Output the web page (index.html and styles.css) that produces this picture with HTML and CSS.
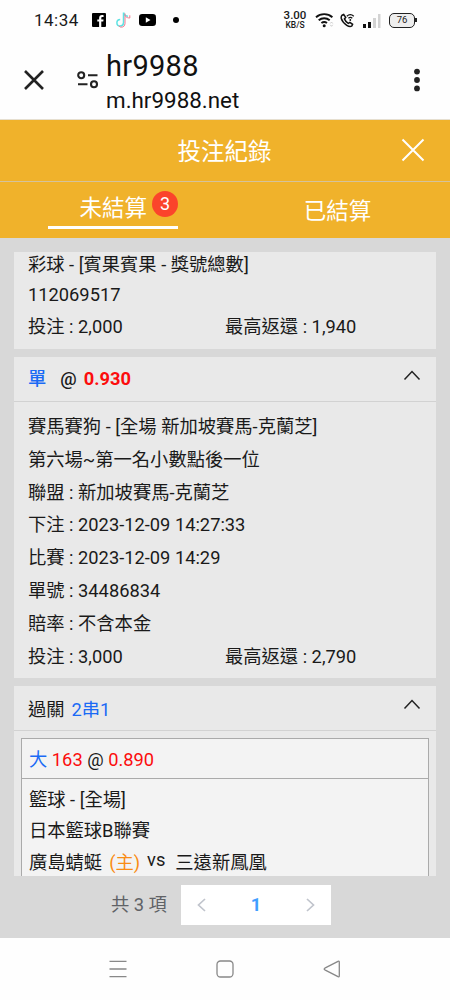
FILE: index.html
```html
<!DOCTYPE html>
<html lang="zh-Hant">
<head>
	<meta charset="UTF-8">
	<title>投注紀錄</title>
	<link rel="stylesheet" href="styles.css">
</head>
<body>
	<div class="status">
		<span class="time">14:34</span>
		<svg class="fb" width="14" height="14" viewBox="0 0 14 14"><rect width="14" height="14" rx="1" fill="#000"/><path d="M9.3 14V8.6h2l.3-2.1H9.3V5.2c0-.7.3-1.1 1.1-1.1h1.2V2.2c-.4-.1-1-.1-1.6-.1-1.800 0-2.900 1-2.900 2.900v1.500H5.300v2.100h1.800V14z" fill="#fff"/></svg>
		<svg class="tiktok" width="16" height="18" viewBox="0 0 16 18" fill="none" stroke-width="1.500"><path d="M8.500 1.500v10.300a3.300 3.300 0 1 1-3.300-3.400M8.800 1.500c.3 2.300 1.900 3.600 4.200 3.800" stroke="#5fe3e3"/><path d="M10 2.500v10.200a3.500 3.500 0 0 1-6.200 2.200M10.500 5.500c1.200 1 2.600 1.500 4.300 1.500V4.300" stroke="#f2778d" stroke-width="1"/></svg>
		<svg class="yt" width="17" height="12" viewBox="0 0 17 12"><rect width="17" height="12" rx="3.200" fill="#000"/><path d="M6.800 3.300v5.400L11.500 6z" fill="#fff"/></svg>
		<i class="dot"></i>
		<div class="speed"><b>3.00</b><span>KB/S</span></div>
		<svg class="wifi" width="19" height="16" viewBox="0 0 19 16" fill="none" stroke="#111" stroke-width="1.900"><path d="M1 5.200a12.500 12.500 0 0 1 16.400 0M3.700 8.200a8.500 8.500 0 0 1 11 0M6.400 11a4.600 4.600 0 0 1 5.600 0"/><circle cx="9.200" cy="13.700" r="1.500" fill="#111" stroke="none"/><path d="M15.300 11.500l1.200-1.500 1.200 1.500M15.300 12.800l1.200 1.500 1.200-1.500" stroke="#ccc" stroke-width="1"/></svg>
		<svg class="call" width="15" height="15" viewBox="0 0 15 15" fill="none" stroke="#111" stroke-width="1.500"><path d="M2 2.300l1.700-.8 2 2.900-1.300 1.500c.8 2 2 3.400 3.900 4.500l1.600-1.100 2.700 2-.8 1.700c-1.200.9-3.200.5-5-.7C3.700 10.200 2 8 1.300 5.500c-.3-1.400 0-2.500.7-3.200z"/><path d="M6.800 3.200c2.200-1.900 4.800-1.900 7 0M8.400 5.200c1.200-1 2.700-1 3.900 0" stroke-width="1.300"/><circle cx="10.300" cy="7" r=".9" fill="#111" stroke="none"/></svg>
		<svg class="signal" width="18" height="15" viewBox="0 0 18 15"><rect y="11" width="3" height="4" fill="#111"/><rect x="5" y="9" width="3" height="6" fill="#111"/><rect x="10" y="5" width="3" height="10" fill="#d3d3d3"/><rect x="15" y="1" width="2.500" height="14" fill="#d3d3d3"/></svg>
		<div class="battery">76</div>
	</div>

	<div class="browser">
		<svg class="exit" width="20" height="20" viewBox="0 0 20 20" stroke="#222" stroke-width="2.600"><path d="M1 1l18 18M19 1L1 19"/></svg>
		<svg class="tune" width="22" height="18" viewBox="0 0 22 18" fill="none" stroke="#222" stroke-width="2.100"><circle cx="4.200" cy="4.200" r="3"/><path d="M11 4.200h9.500M1 13.200h9.500"/><circle cx="17" cy="13.200" r="3"/></svg>
		<div class="site">
			<div class="name">hr9988</div>
			<div class="host">m.hr9988.net</div>
		</div>
		<svg class="more" width="6" height="24" viewBox="0 0 6 24" fill="#222"><circle cx="3" cy="3.600" r="2.900"/><circle cx="3" cy="12" r="2.900"/><circle cx="3" cy="20.400" r="2.900"/></svg>
	</div>

	<div class="title">
		<span>投注紀錄</span>
		<svg class="close" width="24" height="24" viewBox="0 0 24 24" stroke="#fff" stroke-width="2"><path d="M1.500 1.500l21 21M22.500 1.500l-21 21"/></svg>
	</div>
	<div class="tabs">
		<div class="tab current"><span>未結算</span><em>3</em></div>
		<div class="tab">已結算</div>
	</div>

	<div class="main">
		<div class="list">
			<div class="card first">
				<p>彩球 - [賓果賓果 - 獎號總數]</p>
				<p>112069517</p>
				<p class="money"><span>投注 : 2,000</span><span>最高返還 : 1,940</span></p>
			</div>

			<div class="card">
				<div class="head">
					<span class="blue strong">單</span><span class="at">@</span><b class="red">0.930</b>
					<svg class="arrow" width="18" height="11" viewBox="0 0 18 11" fill="none" stroke="#222" stroke-width="1.500"><path d="M1.500 9.500L9 1.500l7.500 8"/></svg>
				</div>
				<div class="body">
					<p>賽馬賽狗 - [全場 新加坡賽馬-克蘭芝]</p>
					<p>第六場~第一名小數點後一位</p>
					<p>聯盟 : 新加坡賽馬-克蘭芝</p>
					<p>下注 : 2023-12-09 14:27:33</p>
					<p>比賽 : 2023-12-09 14:29</p>
					<p>單號 : 34486834</p>
					<p>賠率 : 不含本金</p>
					<p class="money"><span>投注 : 3,000</span><span>最高返還 : 2,790</span></p>
				</div>
			</div>

			<div class="card parlay">
				<div class="head">
					<span>過關</span><span class="blue combo">2串1</span>
					<svg class="arrow" width="18" height="11" viewBox="0 0 18 11" fill="none" stroke="#222" stroke-width="1.500"><path d="M1.500 9.500L9 1.500l7.500 8"/></svg>
				</div>
				<div class="box">
					<div class="odds"><span class="blue">大</span> <span class="red">163</span> @ <span class="red">0.890</span></div>
					<div class="match">
						<p>籃球 - [全場]</p>
						<p>日本籃球B聯賽</p>
						<p class="teams"><span>廣島蜻蜓</span><span class="home">(主)</span><span class="vs">vs</span><span>三遠新鳳凰</span></p>
					</div>
				</div>
			</div>
		</div>

		<div class="pager">
			<span class="total">共 3 項</span>
			<div class="pages">
				<svg width="9" height="14" viewBox="0 0 9 14" fill="none" stroke="#c0c4cc" stroke-width="1.700"><path d="M8 1L1.500 7 8 13"/></svg>
				<b>1</b>
				<svg width="9" height="14" viewBox="0 0 9 14" fill="none" stroke="#c0c4cc" stroke-width="1.700"><path d="M1 1l6.500 6L1 13"/></svg>
			</div>
		</div>
	</div>

	<div class="nav">
		<svg width="18" height="18" viewBox="0 0 18 18" stroke="#888" stroke-width="1.300"><path d="M.5 1.300h17M.5 9h17M.5 16.700h17"/></svg>
		<svg width="18" height="18" viewBox="0 0 18 18" fill="none" stroke="#888" stroke-width="1.300"><rect x="1" y="1" width="16" height="16" rx="3.500"/></svg>
		<svg width="18" height="18" viewBox="0 0 18 18" fill="none" stroke="#888" stroke-width="1.300" stroke-linejoin="round"><path d="M15 1.300L1.800 8.200q-1.300.8 0 1.600L15 16.700q1.300.4 1.300-1V2.300q0-1.400-1.300-1z"/></svg>
	</div>
</body>
</html>
```

FILE: styles.css
```css
*{
	box-sizing: border-box;
	padding: 0;
	margin: 0;
}
body{
	width: 450px;
	height: 1000px;
	overflow: hidden;
	background: #fefefe;
	color: #1a1a1a;
	font: 18.3px/32.8px Roboto, "Noto Sans CJK TC", sans-serif;
}
svg{
	display: block;
	flex: none;
}
/* 手機狀態列 */
.status{
	display: flex;
	align-items: center;
	height: 40px;
	padding-left: 34px;
	line-height: 20px;
}
.time{
	width: 58px;
	font-size: 17px;
	letter-spacing: 0.5px;
}
.tiktok{
	margin-left: 9px;
}
.yt{
	margin-left: 8px;
}
.dot{
	width: 6px;
	height: 6px;
	margin-left: 17px;
	border-radius: 50%;
	background: #000;
}
.speed{
	width: 24px;
	margin-left: 104px;
	text-align: center;
}
.speed b,
.speed span{
	display: block;
	font-size: 11.5px;
	line-height: 11px;
	font-weight: 500;
}
.speed span{
	font-size: 8.5px;
	line-height: 9px;
}
.wifi{
	margin-left: 8px;
}
.call{
	margin-left: 6px;
}
.signal{
	margin-left: 8px;
}
.battery{
	position: relative;
	width: 26px;
	height: 15px;
	margin-left: 8px;
	border: 1.5px solid #222;
	border-radius: 5px;
	background: #eee;
	font-size: 9.5px;
	line-height: 12px;
	text-align: center;
}
.battery::after{
	content: "";
	position: absolute;
	right: -3px;
	top: 4px;
	width: 2px;
	height: 4px;
	background: #222;
}
/* 網址列 */
.browser{
	display: flex;
	align-items: center;
	height: 80px;
	padding: 0 30px 0 24px;
	border-bottom: 1px solid #e6dfd0;
	color: #111;
}
.tune{
	margin-left: 33px;
}
.site{
	flex: 1;
	margin-left: 7px;
	padding-top: 4px;
}
.name{
	font-size: 29px;
	line-height: 36px;
	letter-spacing: 0.3px;
}
.host{
	font-size: 22.4px;
	line-height: 32px;
}
.title{
	display: flex;
	align-items: center;
	height: 62px;
	padding: 0 25px 2px 48px;
	border-bottom: 1px solid #d4c29c;
	background: #f0b22b;
	color: #fff;
	font-size: 23.5px;
}
.title span{
	flex: 1;
	padding-top: 5px;
	text-align: center;
}
.tabs{
	display: flex;
	height: 56px;
	background: #f0b22b;
	color: #fff;
	font-size: 22.5px;
}
.tab{
	flex: 1;
	padding-top: 13px;
	text-align: center;
}
.current{
	flex: none;
	display: flex;
	justify-content: flex-end;
	width: 130px;
	height: 47px;
	margin: 0 47px 0 48px;
	padding-top: 9px;
	border-bottom: 3px solid #fff;
}
.current span{
	padding-top: 1px;
}
.current em{
	width: 26px;
	height: 26px;
	margin-left: 5px;
	border-radius: 50%;
	background: #fb442b;
	font: 18px/26px Roboto, sans-serif;
}
.main{
	height: 700px;
	padding: 14px 14px 0;
	background: #d8d8d8;
}
.list{
	height: 624px;
	overflow: hidden;
}
.card{
	display: flow-root;
	margin-bottom: 8px;
	background: #e9e9e9;
}
.first{
	height: 97px;
	padding: 0 14px;
}
.first p{
	line-height: 30px;
}
.first p:first-child{
	margin-top: -2px;
}
.first .money{
	padding-top: 2px;
}
.head{
	display: flex;
	align-items: center;
	height: 45px;
	padding: 0 15px 0 14px;
	border-bottom: 1px solid #d2d2d2;
}
.arrow{
	margin: -8px 0 0 auto;
}
.blue{
	color: #1a6af5;
}
.red{
	color: #fc0d0d;
}
.strong{
	font-weight: 500;
}
.at{
	margin: 0 7px 0 14px;
	font-weight: 500;
}
.combo{
	margin-left: 7px;
}
.body{
	height: 276px;
	padding: 9px 14px 0;
}
.money{
	display: flex;
}
.money span:first-child{
	width: 197px;
}
/* 過關單 */
.parlay .head span{
	padding-top: 4px;
}
.box{
	height: 200px;
	margin: 7px 7px 0;
	border: 1px solid #aaa;
	background: #f3f3f3;
}
.odds{
	height: 40px;
	padding-left: 7px;
	border-bottom: 1px solid #aaa;
	line-height: 41px;
}
.match{
	padding: 5px 7px;
	line-height: 31.4px;
}
.teams{
	display: flex;
}
.home{
	margin-left: 7px;
	color: #f98c14;
}
.vs{
	margin: -3px 10px 0 7px;
}
.pager{
	display: flex;
	align-items: center;
	margin-top: 9px;
	padding-left: 97px;
	height: 40px;
}
.total{
	width: 70px;
	color: #606266;
}
.pages{
	display: flex;
	align-items: center;
	justify-content: space-between;
	width: 150px;
	height: 40px;
	padding: 0 16px;
	background: #fff;
	color: #409eff;
}
.nav{
	display: flex;
	justify-content: space-between;
	padding: 22px 109px 0 109px;
	height: 62px;
}
```
